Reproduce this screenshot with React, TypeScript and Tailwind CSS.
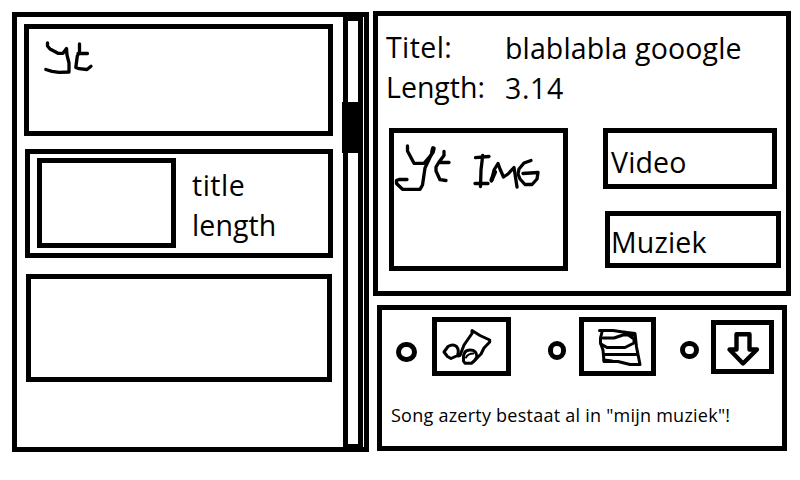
import type { ReactNode } from "react";

function Sketch({ box, width = 3.3, children }: { box: string; width?: number; children: ReactNode }) {
  return (
    <svg
      viewBox={box}
      className="block h-full w-full"
      fill="none"
      stroke="#000"
      strokeWidth={width}
      strokeLinecap="round"
      strokeLinejoin="round"
    >
      {children}
    </svg>
  );
}

function ResultList() {
  return (
    <div className="w-[326px] shrink-0 pt-[7px]">
      <div className="ml-[7px] h-28 w-[309px] border-5 border-black">
        <Sketch box="29 29 299 102">
          <path d="M47.5 42.8V46L50 49L58 53.3H63L66.500 48.5L67 55L69 63V72L59 72.3L52 71.3L45.8 69.5" />
          <path d="M79.5 44V52L77.3 56L75.8 67.5L79 68.700L87 69.500L91 66.3M78 53.5H87.500" />
        </Sketch>
      </div>
      <div className="mt-[13px] ml-2 flex h-[109px] w-[308px] border-5 border-black">
        <div className="mt-1 ml-[7px] h-[90px] w-[139px] border-5 border-black" />
        <div className="mt-[11px] ml-4 text-[28.5px] leading-10">
          <p className="tracking-[0.5px]">title</p>
          <p className="tracking-[0.1px]">length</p>
        </div>
      </div>
      <div className="mt-4 ml-[9px] h-[108px] w-[306px] border-5 border-black" />
    </div>
  );
}

function Details() {
  return (
    <section className="h-[285px] w-[418px] border-5 border-black">
      <div className="flex h-[112px] pt-[11px] pl-2 text-[28.5px] leading-10">
        <div className="w-[119px]">
          <p className="tracking-[0.4px]">Titel:</p>
          <p>Length:</p>
        </div>
        <div className="pt-px whitespace-nowrap">
          <p className="tracking-[0.13px]">blablabla gooogle</p>
          <p className="tracking-[0.6px]">3.14</p>
        </div>
      </div>
      <div className="flex pl-[11px]">
        <div className="h-[143px] w-[179px] border-5 border-black">
          <Sketch box="394 133 169 133">
            <path d="M407.5 146V151L414 163.3H424L432 154" />
            <path d="M433.3 148.5L432.5 152" strokeWidth="4.8" />
            <path d="M432.5 152L425 168L422.5 185L420 189.3H402.5L396.5 183.5V180.5L399 179.5H407" />
            <path d="M444 151.5V155.5L439 162L436 167V171L440 179.7L446 180.5M440 162.5H449" />
            <path d="M475.5 157.7L489 156.5M482.7 155.5L481 170L480.5 186.5M475 183.5H488" />
            <path d="M491.5 181L494 170L498 163.5L500 169L503.5 177L508 174L514 167.5L517 187" />
            <path d="M491.5 180L495 172" strokeWidth="4.3" />
            <path d="M531 160.5L524 163L519 169L518 174L520 179L525 184.5H532L537 179L538 172.5L523 173.5" />
          </Sketch>
        </div>
        <div className="pl-[35px] text-[28.5px] tracking-[0.15px]">
          <button className="flex h-[61px] w-[174px] border-5 border-black pt-[9px] pl-[3px] leading-10">
            Video
          </button>
          <button className="mt-[22px] ml-0.5 flex h-[57px] w-44 border-5 border-black pt-[6px] pl-[1px] leading-10">
            Muziek
          </button>
        </div>
      </div>
    </section>
  );
}

function Actions() {
  return (
    <section className="mt-[9px] ml-1 h-[146px] w-[410px] border-5 border-black">
      <div className="flex h-[66px] items-start pt-[7px]">
        <div className="mt-[25px] ml-[14px] h-5 w-[21px] rounded-full border-5 border-black" />
        <div className="ml-[15px] h-[59px] w-[79px] border-5 border-black">
          <Sketch box="437 322 69 49" width={3}>
            <path d="M444 352L448 346.5Q453 343.500 456.500 346.500Q459.500 350 457.500 355.500L451 358.5L447.500 356.500Z" />
            <path d="M458 356L460 355.500L464 345L472 333.500V330.500L480 335.500L489.700 340V342L484 348L481 354L476 359" />
            <path d="M463.500 359Q463 350 470 350Q477 350 476.800 357Q476 360 471.500 363.300H465L463.500 361Z" />
            <path d="M466 357.500Q468 353.500 473.500 353.500" strokeWidth="2" />
          </Sketch>
        </div>
        <div className="mt-6 ml-[37px] h-[19px] w-[18px] rounded-full border-5 border-black" />
        <div className="ml-[13px] h-[59px] w-[77px] border-5 border-black">
          <Sketch box="584 322 67 49" width={3}>
            <path d="M599.500 330.500H613L623 332L635 333.500L636.500 347L640 364.500H630L618 361.500H604L603 350L600.500 343V338L602 332" />
            <path d="M603 338H614L623 335L634 335M624 332L634 339V343L625 347.500H607L601 344M604 354.500H636M604 360L612 361" />
          </Sketch>
        </div>
        <div className="mt-6 ml-6 h-[18px] w-[19px] rounded-full border-5 border-black" />
        <div className="mt-[3px] ml-3 h-[54px] w-[63px] border-5 border-black">
          <Sketch box="716 325 53 44" width={4.4}>
            <path d="M736.500 334.200H749.500V349.500H757L743 363.500L729.500 349.500H736.500Z" />
          </Sketch>
        </div>
      </div>
      <p className="mt-[24px] ml-[9px] text-[18px] leading-[30px] tracking-[0.24px] whitespace-nowrap">
        Song azerty bestaat al in "mijn muziek"!
      </p>
    </section>
  );
}

export default function App() {
  return (
    <main className="flex h-[480px] w-[800px] overflow-hidden bg-white pl-3 font-['Open_Sans',sans-serif] text-black">
      <section className="mt-3 flex h-[440px] w-[357px] shrink-0 border-5 border-black">
        <ResultList />
        <div className="-mt-px -mb-0.5 w-5 shrink-0 border-5 border-black">
          <div className="mt-[81px] -ml-1.5 h-[51px] w-[21px] bg-black" />
        </div>
      </section>
      <div className="ml-1 pt-[11px]">
        <Details />
        <Actions />
      </div>
    </main>
  );
}
